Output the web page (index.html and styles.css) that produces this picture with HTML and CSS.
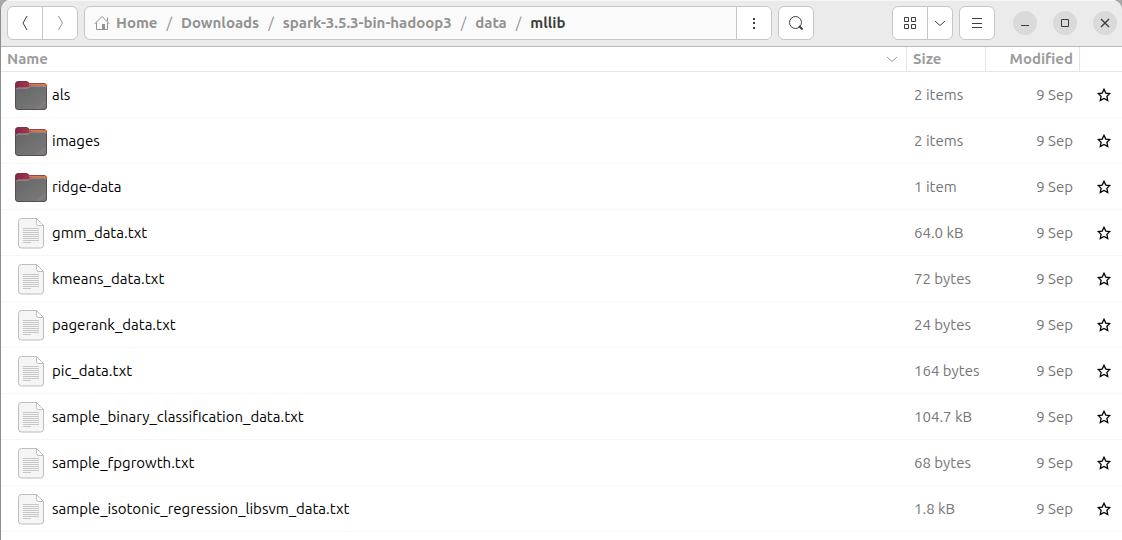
FILE: index.html
```html
<!DOCTYPE html>
<html lang="en">
<head>
<meta charset="utf-8">
<title>mllib</title>
<link rel="stylesheet" href="styles.css">
</head>
<body>
<svg class="sprite" aria-hidden="true">
  <defs>
    <linearGradient id="folder-back" x1="0" x2="1"><stop offset="0" stop-color="#80294b"/><stop offset=".5" stop-color="#a63a4b"/><stop offset="1" stop-color="#e8703a"/></linearGradient>
    <linearGradient id="folder-front" x1="0" y1="0" x2="1" y2="1"><stop offset="0" stop-color="#656565"/><stop offset=".8" stop-color="#777"/><stop offset=".81" stop-color="#808080"/><stop offset="1" stop-color="#747474"/></linearGradient>
  </defs>
  <symbol id="folder" viewBox="0 0 32 32">
    <path d="M.5 5Q.5 2.500 3 2.500H11Q12.500 2.500 13.500 3.500L14.500 4.500H29Q31.500 4.500 31.500 7V16H.5Z" fill="url(#folder-back)" stroke="#7d3446"/>
    <path d="M14 5.500H29Q30.500 5.500 30.800 8" fill="none" stroke="#e8743c" stroke-width="1.400"/>
    <path d="M.5 11Q.5 9 2.500 9H12Q13.300 9 14.300 8Q15.300 7 16.500 7H29Q31.500 7 31.500 9.500V28Q31.500 30.500 29 30.500H3Q.5 30.500 .5 28Z" fill="url(#folder-front)"/>
    <path d="M.5 11V28Q.5 30.500 3 30.500H29Q31.500 30.500 31.500 28V9.500" fill="none" stroke="#5a4c4f"/>
    <path d="M1.500 10.500Q1.800 9 3 9H12Q13.500 9 14.500 8Q15.500 7 16.500 7H29Q30.300 7 30.800 8.500" fill="none" stroke="#a39c9d"/>
  </symbol>
  <symbol id="file" viewBox="0 0 32 32">
    <path d="M6.500 1.500H21.500L28.500 8.500V28Q28.500 31 25.500 31H6.500Q3.500 31 3.500 28V4.500Q3.500 1.500 6.500 1.500Z" fill="#f5f5f5" stroke="#bdbdbd"/>
    <path d="M21.500 1.500V6.500Q21.500 8.500 23.500 8.500H28.500Z" fill="#fff" stroke="#bdbdbd"/>
    <path d="M8 11.500H24M8 13.500H24M8 15.500H24M8 17.500H24M8 19.500H24M8 21.500H24M8 23.500H24M8 25.500H16" stroke="#c7c7c7" fill="none"/>
  </symbol>
  <symbol id="star" viewBox="0 0 16 16">
    <path d="M8 2.300L9.800 6.100L13.700 6.500L10.900 9.400L11.700 13.500L8 11.500L4.300 13.500L5.100 9.400L2.300 6.500L6.200 6.100Z" fill="none" stroke="#000" stroke-width="1.300"/>
  </symbol>
</svg>
<div class="window">
  <header class="toolbar">
    <div class="group">
      <button class="tool" type="button" aria-label="Back"><svg class="icon" viewBox="0 0 16 16"><path d="M10 1L6 8L10 15"/></svg></button>
      <button class="tool dim" type="button" aria-label="Forward"><svg class="icon" viewBox="0 0 16 16"><path d="M6.500 1L10.500 8L6.500 15"/></svg></button>
    </div>
    <nav class="group path" aria-label="Path">
      <div class="crumbs">
        <a class="home" href="#"><svg class="icon" viewBox="0 0 16 16"><path d="M.5 9L8 1.500L15.500 9M2.500 7.500V14.500H8M13.500 7.500V14.500H11M13.500 6V2.500"/><path d="M8 9H11V15H8Z" fill="currentColor" stroke="none"/></svg>Home</a><i>/</i>
        <a href="#">Downloads</a><i>/</i>
        <a href="#">spark-3.5.3-bin-hadoop3</a><i>/</i>
        <a href="#">data</a><i>/</i>
        <a class="current" href="#" aria-current="page">mllib</a>
      </div>
      <button class="tool" type="button" aria-label="Folder menu"><svg class="icon solid" viewBox="0 0 16 16"><path d="M7 3h2v2H7zM7 7h2v2H7zM7 12h2v2H7z"/></svg></button>
    </nav>
    <div class="group"><button class="tool" type="button" aria-label="Search"><svg class="icon" viewBox="0 0 16 16"><circle cx="7.500" cy="7.500" r="6"/><path d="M11 11L14.500 14.500" stroke-width="2"/></svg></button></div>
    <div class="spacer"></div>
    <div class="group">
      <button class="tool" type="button" aria-label="Grid view"><svg class="icon" viewBox="0 0 16 16"><path d="M2.500 2.500h4v4h-4zM9.500 2.500h4v4h-4zM2.500 9.500h4v4h-4zM9.500 9.500h4v4h-4z"/></svg></button>
      <button class="tool narrow" type="button" aria-label="View options"><svg class="icon" viewBox="0 0 16 16"><path d="M3 6L8 10.500L13 6"/></svg></button>
    </div>
    <div class="group"><button class="tool" type="button" aria-label="Main menu"><svg class="icon" viewBox="0 0 16 16"><path d="M3 3.500H13M3 8.500H13M3 12.500H13"/></svg></button></div>
    <div class="controls">
      <button type="button" aria-label="Minimise"><svg class="icon" viewBox="0 0 16 16"><path d="M4 10.500H12"/></svg></button>
      <button type="button" aria-label="Maximise"><svg class="icon" viewBox="0 0 16 16"><path d="M4.500 4.500h7v7h-7z"/></svg></button>
      <button type="button" aria-label="Close"><svg class="icon" viewBox="0 0 16 16"><path d="M4 4L12 12M12 4L4 12" stroke-width="1.400"/></svg></button>
    </div>
  </header>
  <table class="files">
    <colgroup><col><col class="col-size"><col class="col-modified"><col class="col-star"></colgroup>
    <thead>
      <tr><th scope="col"><div class="sort">Name<svg class="icon" viewBox="0 0 16 16"><path d="M3 6L8 10.500L13 6"/></svg></div></th><th scope="col">Size</th><th class="date" scope="col">Modified</th><td></td></tr>
    </thead>
    <tbody>
      <tr><td><div class="name"><svg><use href="#folder"/></svg>als</div></td><td>2 items</td><td class="date">9 Sep</td><td><button class="star" type="button" aria-label="Star als"><svg><use href="#star"/></svg></button></td></tr>
      <tr><td><div class="name"><svg><use href="#folder"/></svg>images</div></td><td>2 items</td><td class="date">9 Sep</td><td><button class="star" type="button" aria-label="Star images"><svg><use href="#star"/></svg></button></td></tr>
      <tr><td><div class="name"><svg><use href="#folder"/></svg>ridge-data</div></td><td>1 item</td><td class="date">9 Sep</td><td><button class="star" type="button" aria-label="Star ridge-data"><svg><use href="#star"/></svg></button></td></tr>
      <tr><td><div class="name"><svg><use href="#file"/></svg>gmm_data.txt</div></td><td>64.0 kB</td><td class="date">9 Sep</td><td><button class="star" type="button" aria-label="Star gmm_data.txt"><svg><use href="#star"/></svg></button></td></tr>
      <tr><td><div class="name"><svg><use href="#file"/></svg>kmeans_data.txt</div></td><td>72 bytes</td><td class="date">9 Sep</td><td><button class="star" type="button" aria-label="Star kmeans_data.txt"><svg><use href="#star"/></svg></button></td></tr>
      <tr><td><div class="name"><svg><use href="#file"/></svg>pagerank_data.txt</div></td><td>24 bytes</td><td class="date">9 Sep</td><td><button class="star" type="button" aria-label="Star pagerank_data.txt"><svg><use href="#star"/></svg></button></td></tr>
      <tr><td><div class="name"><svg><use href="#file"/></svg>pic_data.txt</div></td><td>164 bytes</td><td class="date">9 Sep</td><td><button class="star" type="button" aria-label="Star pic_data.txt"><svg><use href="#star"/></svg></button></td></tr>
      <tr><td><div class="name"><svg><use href="#file"/></svg>sample_binary_classification_data.txt</div></td><td>104.7 kB</td><td class="date">9 Sep</td><td><button class="star" type="button" aria-label="Star sample_binary_classification_data.txt"><svg><use href="#star"/></svg></button></td></tr>
      <tr><td><div class="name"><svg><use href="#file"/></svg>sample_fpgrowth.txt</div></td><td>68 bytes</td><td class="date">9 Sep</td><td><button class="star" type="button" aria-label="Star sample_fpgrowth.txt"><svg><use href="#star"/></svg></button></td></tr>
      <tr><td><div class="name"><svg><use href="#file"/></svg>sample_isotonic_regression_libsvm_data.txt</div></td><td>1.8 kB</td><td class="date">9 Sep</td><td><button class="star" type="button" aria-label="Star sample_isotonic_regression_libsvm_data.txt"><svg><use href="#star"/></svg></button></td></tr>
    </tbody>
  </table>
</div>
</body>
</html>
```
FILE: styles.css
```css
* { box-sizing: border-box; }
body {
  margin: 0;
  background: #a9a9a9;
  font: 15px/20px Ubuntu, "Noto Sans", sans-serif;
  color: #000;
}
.sprite { position: absolute; width: 0; height: 0; }
.window {
  min-height: 100vh;
  border-left: 1px solid #8e8e8e;
  border-radius: 10px 10px 0 0;
  background: #fff;
  overflow: hidden;
}
.toolbar {
  display: flex;
  align-items: center;
  gap: 6px;
  padding: 5px 5px 6px 6px;
  background: #ebebeb;
  border-top: 1px solid #f8f8f8;
  border-bottom: 1px solid #b8b8b8;
}
button { margin: 0; padding: 0; border: 0; background: none; color: inherit; font: inherit; }
.group {
  display: flex;
  height: 34px;
  border: 1px solid #c6c6c6;
  border-radius: 6px;
  background: #fff;
  overflow: hidden;
}
.tool {
  display: flex;
  align-items: center;
  justify-content: center;
  width: 34px;
  color: #3d3d3d;
}
.tool + .tool, .crumbs + .tool { border-left: 1px solid #c6c6c6; width: 35px; }
.tool.narrow { width: 25px; }
.tool.dim { color: #929292; }
.icon { display: block; width: 16px; height: 16px; fill: none; stroke: currentColor; }
.icon.solid { fill: currentColor; stroke: none; }
.path { flex: 0 1 688px; background: #fafafa; }
.path .tool { background: #fff; }
.crumbs {
  flex: 1;
  display: flex;
  align-items: center;
  gap: 9px;
  padding-left: 9px;
  font-weight: 700;
  white-space: nowrap;
  overflow: hidden;
}
.crumbs a { color: #929292; text-decoration: none; }
.crumbs i { color: #929292; font-style: normal; font-weight: 400; }
.crumbs .home { display: flex; align-items: center; gap: 6px; }
.crumbs .current { color: #3d3d3d; }
.spacer { flex: 1; }
.controls { display: flex; gap: 16px; padding-left: 12px; }
.controls button {
  display: flex;
  align-items: center;
  justify-content: center;
  width: 24px;
  height: 24px;
  border-radius: 50%;
  background: #dadada;
  color: #3d3d3d;
}
.files { width: 100%; table-layout: fixed; border-collapse: separate; border-spacing: 0; }
.col-size { width: 79px; }
.col-modified { width: 94px; }
.col-star { width: 42px; }
th, td { padding: 0 6px; text-align: left; white-space: nowrap; }
thead th, thead td {
  height: 25px;
  border-bottom: 1px solid #e6e6e6;
  border-right: 1px solid #e6e6e6;
  color: #9c9c9c;
}
thead td { border-right: 0; }
.sort { display: flex; align-items: center; justify-content: space-between; }
tbody td { height: 46px; padding-left: 7px; border-bottom: 1px solid #f7f7f7; color: #757575; }
tbody td:first-child { padding-left: 14px; color: #000; }
.name { display: flex; align-items: center; gap: 5px; }
.name svg { width: 32px; height: 32px; }
th.date, td.date { text-align: right; }
tbody .date { padding-right: 7px; }
tbody td:last-child { padding: 0; }
.star { display: block; margin: 0 auto 0 16px; }
.star svg { display: block; width: 16px; height: 16px; }
```
